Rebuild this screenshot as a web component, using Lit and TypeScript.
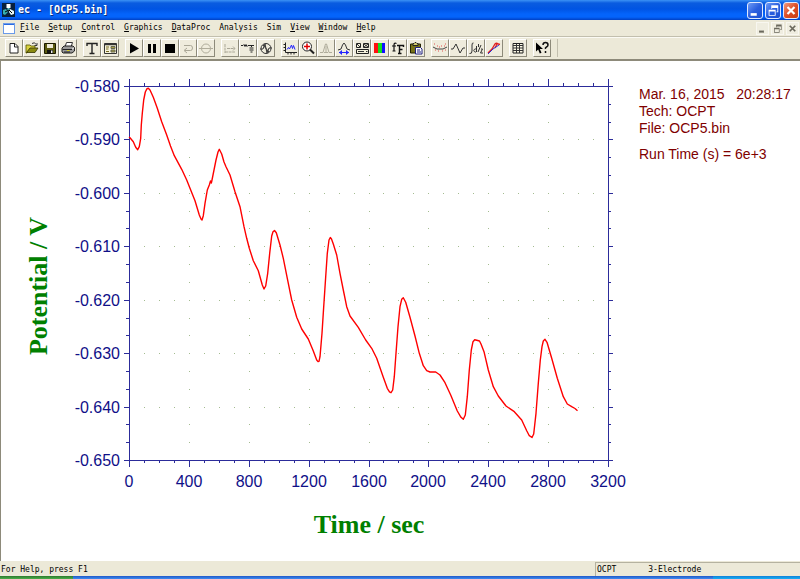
import { LitElement, html, svg, css } from "lit";
import { customElement } from "lit/decorators.js";

// Axis frame of the plot in drawing units.
const LEFT = 129;
const RIGHT = 608;
const TOP = 86;
const BOTTOM = 460;
const X_MINOR = 32;
const Y_MINOR = 21;
const xAt = (i: number) => Math.round(LEFT + ((RIGHT - LEFT) * i) / X_MINOR);
const yAt = (i: number) => Math.round(TOP + ((BOTTOM - TOP) * i) / Y_MINOR);
const range = (n: number) => Array.from({ length: n }, (_, i) => i);

const TRACE = `129,137 130,137.7 133.3,141.7 135.7,147.3 137.7,149.7 139.3,146.7 140.7,138.3 141.3,125 142.3,113.3
143.7,100 145.3,92 147,88.6 148.3,88.3 150,90 153.3,97.3 157.3,108.3 161.7,121.7 166.7,135 170.5,146 174.3,155.7 181.7,169.3 186.7,180
190,188.3 195,200.7 199.3,215 201,219 202,220 203.3,215.7 205,203.3 207.3,190 209.3,185 210.5,181 211.3,183 211.8,181 214,170
216,160 218,152 219.3,149.3 221.7,154 224,162 226,166.7 230,175 235,191.7 240,206.7 244,226.7 246.7,238.3 249.3,248.3
253.3,260.7 258.3,270.7 262.3,285 264,289 265.7,286 267.7,273.3 269.7,253.3 271.7,236 273,231.8 274.5,230.5 276.3,232.7 280,245
283.3,258.3 287.3,278.3 291.7,300 296.7,317.3 301.7,329 308.3,339 313.3,351 316.7,360 318,361.6 319,361.3 320,356.7
322,333.3 323.7,306.7 325.7,276.7 327.3,253.3 329,240 330.3,237.5 331.5,239 333.3,244 336.7,255 340,273.3 343.3,290
346.7,306.7 350,316 358.3,327.3 365.7,340 371.7,348.3 376.7,358.3 383.3,377.3 387.3,388.3 389.5,391.8 391,392.7 392.7,390
394.3,376.7 396,353.3 398,326.7 400,306.7 401.7,299.3 403.3,297.7 405.7,302.3 410,317.3 415,336 419.3,353.3
423.3,365.7 426.7,370.7 430,372 435.7,372 440,375 445,382.7 450.7,395 457.3,411 461,417.3 463.3,419.3 465.3,415
467.3,396.7 469.3,370 471.3,350 473,341.7 474.7,339.7 477.7,340.5 479.5,341 481,344 484,351.7 488.3,370 493.3,386.7 498.3,396
506,406 514.3,411.7 521.7,420 526.7,430.7 529.3,435.7 532,437.5 533.7,434 536,413.3 538.3,383.3 540.3,360 542,346.7
543.3,341 545,339.3 547,342.3 551.7,358.3 557.3,378.3 563.3,396.7 567.3,404 571.7,406.7 575,408.5 577.5,410.7`;

const MENUS: [string, boolean][] = [
  ["File", true], ["Setup", true], ["Control", true], ["Graphics", true], ["DataProc", true],
  ["Analysis", false], ["Sim", false], ["View", true], ["Window", true], ["Help", true],
];

// Toolbar glyphs on a 16 x 16 grid.
const ICONS: Record<string, unknown> = {
  New: svg`<path d="M4 3.500h5l3 3v6.500H4z" fill="#fff" stroke="#222"/><path d="M8.500 3.500v3.500H12" fill="none" stroke="#222"/>`,
  Open: svg`<path d="M2 5h4l1 1h4v3H6l-3 4H2z" fill="#d8d040" stroke="#555500" stroke-width=".8"/><path d="M2.500 12.500L6 8h8l-3 4.500z" fill="#8a8a10" stroke="#333300" stroke-width=".8"/><path d="M8 3.500q3-2 4 1M13 3v2.500h-2.500" fill="none" stroke="#222" stroke-width=".9"/>`,
  Save: svg`<path d="M2.500 3.500h11v10h-11z" fill="#5a5a10" stroke="#1a1a00"/><path d="M5 4h6v4H5z" fill="#ece9d8"/><path d="M5 10h6v3.500H5z" fill="#111"/><path d="M9 10.500h1.500V13H9z" fill="#eee"/>`,
  Print: svg`<path d="M5 7l1.500-4.500h6L11 7" fill="#fff" stroke="#333"/><path d="M2 8l2-2h9l1.500 1.500V11L12 13H3l-1-1z" fill="#999" stroke="#222"/><path d="M2.500 9.500h9.500M4 12h6" stroke="#222"/><path d="M12 9l2-1" stroke="#eee"/><path d="M7 10.500h2.500" stroke="#d8d020"/>`,
  Technique: svg`<path d="M3 6V3.500h10V6M8 3.500v10M5.500 13.500h5" fill="none" stroke="#222" stroke-width="1.400"/>`,
  Parameters: svg`<path d="M2.500 3.500h12v10h-12z" fill="#f6f3dc" stroke="#333"/><path d="M2.500 4.500h12" stroke="#333" stroke-width="1.500"/><path d="M4 7h3M4 9h2.500M4 11.500h3" stroke="#776a20"/><path d="M9 6.500h4v2H9zM9 10h4v2H9z" fill="#a8a040" stroke="#665"/>`,
  Run: svg`<path d="M4 3l9 5.500L4 13.500z" fill="#000"/>`,
  Pause: svg`<path d="M4 4h3v9H4zM9 4h3v9H9z" fill="#000"/>`,
  Stop: svg`<path d="M3 4h10v9H3z" fill="#000"/>`,
  Reverse: svg`<path d="M4 5.500h6.500a2 2.500 0 0 1 0 5H5M7 8l-3 2.500L7 13" fill="none" stroke="#aaa797"/>`,
  Zero: svg`<circle cx="8" cy="8.500" r="4.500" fill="none" stroke="#b0ad9c"/><path d="M1 8.500h14" stroke="#b0ad9c"/>`,
  Compensation: svg`<path d="M3 4v9M3 12h10M5 8.500h8M11 6.500l2 2-2 2" fill="none" stroke="#aaa797" stroke-dasharray="3 .6"/>`,
  Filter: svg`<path d="M1 5.500h2l1-1 1 2 1-2 1 2 1-1h6M11.500 5v2" fill="none" stroke="#222"/><path d="M9.500 8h4M9.500 10h4M10.500 12h2" stroke="#222" stroke-width="1.200"/>`,
  Cell: svg`<circle cx="8" cy="8.500" r="5" fill="none" stroke="#333"/><path d="M2 9h3l2-5 2 9 2-5h3" fill="none" stroke="#333"/><path d="M5 5l6 7" stroke="#333"/>`,
  Plot: svg`<path d="M3.500 2.500v10H15M1.500 4.500h2M1.500 7.500h2M1.500 10.500h2M6 12.500v2M9 12.500v2M12 12.500v2" fill="none" stroke="#222"/><path d="M5 9.500l1.500-2 1 1.500L9.500 5l1 3.500 1-3 1.500 4" fill="none" stroke="#2424ff"/>`,
  Zoom: svg`<circle cx="7" cy="6.500" r="4.500" fill="#fff" stroke="#222"/><path d="M10 9.500l4 4" stroke="#222" stroke-width="2"/><path d="M7 3.500v6M4 6.500h6" stroke="#e00000" stroke-width="1.500"/>`,
  Manual: svg`<path d="M2 12.500h3l2.500-8.500h1L11 12.500h3M8 6v6M6 12.500h4" fill="none" stroke="#b0ad9c"/>`,
  Peak: svg`<path d="M2 10l3-1 1.500-4L8 3l1.500 2L11 9l3 1" fill="none" stroke="#333"/><path d="M3 12.500h10" stroke="#2424ff"/><path d="M3 12.500L6 10v5zM13 12.500L10 10v5z" fill="#2424ff"/>`,
  Overlay: svg`<path d="M2.500 3.500h4v4h-4zM9.500 3.500h5v4h-5zM2.500 9.500h12v4h-12z" fill="#f4f1dc" stroke="#222"/><path d="M3 4l3 3M10 4l4 3M14 4l-4 3M4 11.500h6M12 11.500h1.500" stroke="#333"/>`,
  Colors: svg`<path d="M2 3h4v10H2z" fill="#ff1010"/><path d="M6 3h4v10H6z" fill="#10e020"/><path d="M10 3h3v10h-3z" fill="#1010ff"/>`,
  Font: svg`<path d="M6.500 3.500q-2.500-1-2.500 1.500V11M2 6h4M2.500 11h3" fill="none" stroke="#111" stroke-width="1.200"/><path d="M7 5.500h6.500V7M9.500 5.500v8M8 13.500h3.500M9.500 9.500h3" fill="none" stroke="#111" stroke-width="1.400"/>`,
  Clipboard: svg`<path d="M2.500 4h10v9h-10z" fill="#777218" stroke="#222200"/><path d="M5 5.500V3.500h1l1-1h1l1 1h1v2z" fill="#d8d070" stroke="#222"/><path d="M7.500 7.500h5l1.500 1.500v5H7.500z" fill="#fff" stroke="#202080"/><path d="M9 10h3M9 12h4" stroke="#202080"/>`,
  Smooth: svg`<path d="M1 7l2 1 2 1h6l2-1 2-1" fill="none" stroke="#444"/><path d="M2 4h1M5 6h1M3 10h1M7 7h1M6 11h1M9 6h1M12 6h1M10 11h1M13 4h1M13 10h1" stroke="#e05050"/>`,
  Derivative: svg`<path d="M1 9h2l3-5 4 9 3-5h2" fill="none" stroke="#333"/>`,
  Integral: svg`<path d="M5.500 3Q4 2.500 4 5v6q0 3-2.500 2.500M8.500 6v6M8.500 9.500a1.500 1.500 0 1 0 0 2M10 12l3-7M13 9h1.500l-2 4H15M10.500 4v3" fill="none" stroke="#333"/>`,
  Subtract: svg`<path d="M2 13l4-4 3-5q1.500-1.500 3 0l2 .5M9 8l2-4" fill="none" stroke="#e02020" stroke-width="1.300"/><path d="M2 14l5-5 6-4" fill="none" stroke="#3030d0"/>`,
  Data: svg`<path d="M3 3.500h10v9.500H3z" fill="#fbf8e4" stroke="#222"/><path d="M3 5.500h10M3 8h10M3 10.500h10M6.500 4v9M9.500 4v9" stroke="#333"/>`,
  Help: svg`<path d="M2 2.500v9l2.200-2 1.600 4 1.700-.7-1.700-3.800H9z" fill="#000"/><path d="M9 5q0-2.500 2.500-2.500T14 5q0 1.300-1.500 2t-1 2M11.500 11v2" fill="none" stroke="#111" stroke-width="1.500"/>`,
};

const GROUPS = [
  ["New", "Open", "Save", "Print"],
  ["Technique", "Parameters"],
  ["Run", "Pause", "Stop", "Reverse", "Zero"],
  ["Compensation", "Filter", "Cell"],
  ["Plot", "Zoom", "Manual", "Peak", "Overlay", "Colors", "Font", "Clipboard"],
  ["Smooth", "Derivative", "Integral", "Subtract"],
  ["Data"],
  ["Help"],
];

const minimize = svg`<path d="M3 11h7v3H3z"/>`;
const restore = svg`<path d="M6 2h8v8h-2V9h1V5H7v1H6zM3 7h8v7H3zm1 2v4h6V9z" fill-rule="evenodd"/>`;
const close = svg`<path d="M4 4l8 8m0-8l-8 8" fill="none" stroke="currentColor" stroke-width="2.500"/>`;

@customElement("potential-chart")
class PotentialChart extends LitElement {
  static styles = css`
    :host { display: block; flex: 1; min-width: 0; min-height: 0; }
    .chart { display: block; width: 100%; height: 100%; }
    .axis { fill: none; stroke: #2c2c9a; stroke-width: 1; shape-rendering: crispEdges; }
    .dot { fill: #a4bc90; }
    .tick { font: 16px "Liberation Sans", sans-serif; fill: #101088; }
    .trace { fill: none; stroke: #ff0000; stroke-width: 1.4; stroke-linejoin: round; }
    .title { font: bold 26px "Liberation Serif", serif; fill: #008000; }
  `;

  private ticks() {
    let d = `M${LEFT} ${TOP}H${RIGHT}V${BOTTOM}H${LEFT}Z`;
    for (const i of range(X_MINOR + 1)) {
      const n = i % 4 ? 3 : 7;
      d += `M${xAt(i)} ${TOP}v${-n}M${xAt(i)} ${BOTTOM}v${n}`;
    }
    for (const i of range(Y_MINOR + 1)) {
      const n = i % 3 ? 3 : 5;
      d += `M${LEFT} ${yAt(i)}h${-n}M${RIGHT} ${yAt(i)}h${n}`;
    }
    return d;
  }

  render() {
    const dots = range(Y_MINOR - 1).flatMap((r) =>
      range(X_MINOR - 1)
        .filter((c) => (r + 1) % 3 === 0 || (c + 1) % 4 === 0)
        .map((c) => svg`<rect class="dot" x=${xAt(c + 1)} y=${yAt(r + 1)} width="1" height="1"></rect>`)
    );
    return html`
      <svg class="chart" viewBox="1 61 638 499" preserveAspectRatio="xMinYMin meet" role="img" aria-label="Potential over time">
        ${dots}
        <path class="axis" d=${this.ticks()}></path>
        <polyline class="trace" points=${TRACE}></polyline>
        ${range(8).map((i) => svg`<text class="tick" text-anchor="end" x="120" y=${yAt(i * 3) + 6}>${(-0.58 - i * 0.01).toFixed(3)}</text>`)}
        ${range(9).map((i) => svg`<text class="tick" text-anchor="middle" x=${xAt(i * 4)} y="487">${i * 400}</text>`)}
        <text class="title" text-anchor="middle" x="369" y="533">Time / sec</text>
        <text class="title" text-anchor="middle" transform="translate(47 286) rotate(-90)">Potential / V</text>
      </svg>
    `;
  }
}

@customElement("app-root")
class AppRoot extends LitElement {
  static styles = css`
    :host {
      display: flex; flex-direction: column; height: 100vh; overflow: hidden;
      background: #ece9d8; color: #000; font: 8px "DejaVu Sans Mono", monospace;
    }
    button { margin: 0; padding: 0; border: 0; background: none; color: inherit; font: inherit; }
    .titlebar {
      display: flex; align-items: center; gap: 3px; height: 20px; padding: 0 1px 0 2px; box-sizing: border-box; color: #fff;
      background: linear-gradient(#3c92f5 0, #0a5ce0 3px, #0054e3 9px, #0464fb 14px, #0464fb 17px, #0040c4 20px);
    }
    .logo { width: 13px; height: 14px; }
    .name { flex: 1; margin: 0; font-size: 10px; font-weight: bold; line-height: 14px; text-shadow: 1px 1px #0a2f80; }
    .caption { display: flex; gap: 2px; }
    .cap { width: 16px; height: 17px; box-sizing: border-box; border: 1px solid #dfe9ff; border-radius: 3px; background: linear-gradient(135deg, #6f9bf5, #2a5fdf 50%, #1c50d0); }
    .cap.close { background: linear-gradient(135deg, #f09a80, #dd4f28 50%, #c83c10); }
    .glyph { display: block; width: 100%; height: 100%; fill: currentColor; }
    .menubar { display: flex; align-items: center; gap: 9px; height: 16px; padding: 0 1px 0 3px; border-bottom: 1px solid #c2bfae; }
    .doc { width: 12px; height: 11px; margin-right: -4px; background: #fff; border-top: 2px solid #2a6ae0; outline: 1px solid #6a9ae8; outline-offset: -1px; box-sizing: border-box; }
    .menu { line-height: 14px; }
    .key { text-decoration: underline; }
    .mdi { display: flex; gap: 2px; margin-left: auto; }
    .mdi .cap { width: 13px; height: 13px; border: 1px solid #f8f7f0; border-radius: 0; background: #efede0; color: #6a685c; }
    .toolbar { display: flex; gap: 6px; padding: 1px 5px 2px; border-top: 1px solid #fbfaf4; border-bottom: 2px solid #8d8a7a; }
    .group { display: flex; }
    .tool { width: 18px; height: 18px; box-sizing: border-box; border: 1px solid; border-color: #fff #8d8a7a #8d8a7a #fff; background: #efecdd; }
    .end { width: 1px; background: #c2bfae; }
    .client { display: flex; flex: 1; min-height: 0; background: #fff; border-left: 1px solid #8d8a7a; }
    .info { flex: none; width: 161px; padding-top: 25px; font: 14px/17px "Liberation Sans", sans-serif; color: #800000; }
    .line { margin: 0; white-space: pre; }
    .run { margin-top: 9px; }
    .status { display: grid; grid-template-columns: 1fr 205px; height: 15px; line-height: 15px; padding: 1px 0 0 1px; box-sizing: border-box; }
    .pane { display: flex; gap: 32px; padding-left: 1px; border: solid #b5b2a0; border-width: 1px 0 0 1px; line-height: 13px; }
    .taskbar { display: grid; grid-template-columns: 73px 1fr 87px; height: 3px; }
    .start { background: linear-gradient(#2c7a2c, #4cae4c); }
    .tasks { background: linear-gradient(#2058c8, #3f8cf0); }
    .tray { background: linear-gradient(#1080d8, #18b0f4); }
  `;

  private caption(label: string, glyph: unknown, kind = "") {
    return html`<button class="cap ${kind}" aria-label=${label}><svg class="glyph" viewBox="0 0 16 16">${glyph}</svg></button>`;
  }

  render() {
    return html`
      <header class="titlebar">
        <svg class="logo" viewBox="0 0 13 14" aria-hidden="true">
          <path d="M0 0h13v14H0z" fill="#08203c"/>
          <path d="M4.500 1h4v4h-4z" fill="#fff"/><path d="M5.500 5h2v3h-2z" fill="#58c8c8"/>
          <path d="M1 7l3-1 2 3-3 3-2-1z" fill="#38b0b0"/><path d="M8 6l4 2v3l-3 1-2-3z" fill="#e8f8f8"/>
          <path d="M3 9l4-2 3 3" fill="none" stroke="#000"/>
        </svg>
        <h1 class="name">ec - [OCP5.bin]</h1>
        <div class="caption">
          ${this.caption("Minimize", minimize)}${this.caption("Restore", restore)}${this.caption("Close", close, "close")}
        </div>
      </header>
      <nav class="menubar" aria-label="Menu">
        <span class="doc"></span>
        ${MENUS.map(([m, key]) => html`<button class="menu">${key ? html`<span class="key">${m[0]}</span>${m.slice(1)}` : m}</button>`)}
        <div class="mdi">
          ${this.caption("Minimize document", minimize)}${this.caption("Restore document", restore)}${this.caption("Close document", close)}
        </div>
      </nav>
      <div class="toolbar" role="toolbar" aria-label="Tools">
        ${GROUPS.map((g) => html`<div class="group">${g.map((n) => html`<button class="tool" aria-label=${n}><svg class="glyph" viewBox="0 0 16 16">${ICONS[n]}</svg></button>`)}</div>`)}
        <span class="end"></span>
      </div>
      <main class="client">
        <potential-chart></potential-chart>
        <aside class="info">
          <p class="line">Mar. 16, 2015   20:28:17</p>
          <p class="line">Tech: OCPT</p>
          <p class="line">File: OCP5.bin</p>
          <p class="line run">Run Time (s) = 6e+3</p>
        </aside>
      </main>
      <footer class="status">
        <span>For Help, press F1</span>
        <div class="pane"><span>OCPT</span><span>3-Electrode</span></div>
      </footer>
      <div class="taskbar"><span class="start"></span><span class="tasks"></span><span class="tray"></span></div>
    `;
  }
}
